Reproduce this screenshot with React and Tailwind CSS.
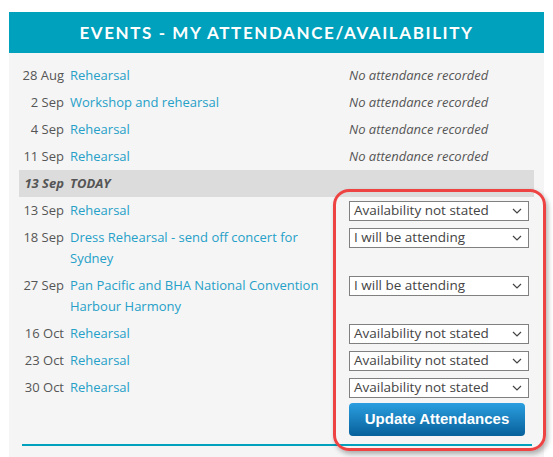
import React from "react";

const ROWS = [
  { date: "28 Aug", title: "Rehearsal", status: "none" },
  { date: "2 Sep", title: "Workshop and rehearsal", status: "none" },
  { date: "4 Sep", title: "Rehearsal", status: "none" },
  { date: "11 Sep", title: "Rehearsal", status: "none" },
  { date: "13 Sep", title: "TODAY", today: true },
  { date: "13 Sep", title: "Rehearsal", status: "Availability not stated" },
  { date: "18 Sep", title: "Dress Rehearsal - send off concert for Sydney", status: "I will be attending" },
  { date: "27 Sep", title: "Pan Pacific and BHA National Convention Harbour Harmony", status: "I will be attending" },
  { date: "16 Oct", title: "Rehearsal", status: "Availability not stated" },
  { date: "23 Oct", title: "Rehearsal", status: "Availability not stated" },
  { date: "30 Oct", title: "Rehearsal", status: "Availability not stated" },
];

function FakeSelect({ value }) {
  return (
    <div className="mt-px flex h-[20px] w-[180px] items-center justify-between border border-[#808080] bg-white pl-[4px] pr-[6px] text-[13.5px] leading-none text-[#444]">
      <span>{value}</span>
      <svg width="10" height="6" viewBox="0 0 10 6" fill="none" stroke="#444" strokeWidth="1.2">
        <path d="M1 1l4 4 4-4" />
      </svg>
    </div>
  );
}

export default function App() {
  return (
    <div className="relative h-[457px] w-[553px] bg-white pt-[12px] pl-[9px] font-['Open_Sans',sans-serif]">
      <div className="h-[445px] w-[535px] bg-[#f5f5f5]">
        <div className="flex h-[41px] items-center justify-center bg-[#00a1bd] font-['Lato',sans-serif] text-[17px] font-bold tracking-[1.6px] text-white">
          EVENTS - MY ATTENDANCE/AVAILABILITY
        </div>

        <div className="px-[10px] pt-[9px]">
          {ROWS.map((r, i) =>
            r.today ? (
              <div key={i} className="flex bg-[#dcdcdc] py-[3px] text-[13px] leading-[21px] font-bold italic text-[#555]">
                <div className="w-[45px] shrink-0 text-right">{r.date}</div>
                <div className="pl-[6px]">{r.title}</div>
              </div>
            ) : (
              <div key={i} className="flex py-[3px] text-[13px] leading-[21px]">
                <div className="w-[45px] shrink-0 text-right text-[#555]">{r.date}</div>
                <div className="w-[265px] shrink-0 pl-[6px] text-[#25a0c8]">{r.title}</div>
                <div className="ml-[20px]">
                  {r.status === "none" ? (
                    <span className="italic text-[#555]">No attendance recorded</span>
                  ) : (
                    <FakeSelect value={r.status} />
                  )}
                </div>
              </div>
            )
          )}

          <div className="mt-[2px] flex">
            <button
              type="button"
              className="ml-[330px] h-[33px] w-[176px] rounded-[4px] bg-gradient-to-b from-[#2a9fe0] to-[#07619b] font-['Liberation_Sans',Arial,sans-serif] text-[15px] font-bold text-white"
            >
              Update Attendances
            </button>
          </div>

          <div className="mt-[8px] ml-[3px] mr-[2px] h-[2px] bg-[#00a1bd]" />
        </div>
      </div>

      {/* red highlight annotation */}
      <div className="pointer-events-none absolute left-[333px] top-[189px] h-[262px] w-[213px] rounded-[16px] border-[3px] border-[#ee4343] shadow-[2px_3px_5px_rgba(0,0,0,0.3)]" />
    </div>
  );
}
